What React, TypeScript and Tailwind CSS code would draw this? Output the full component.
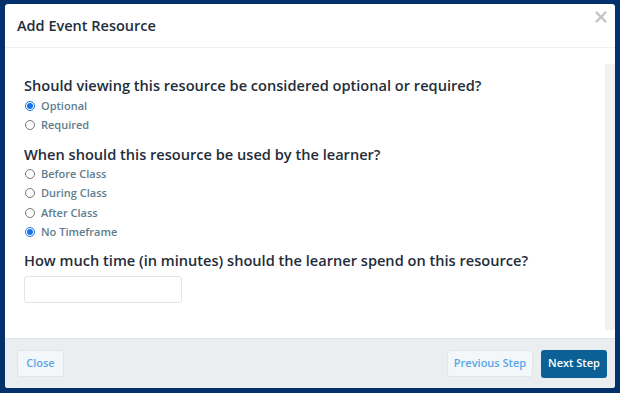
import { useState } from "react";
import { X } from "lucide-react";

const font = { fontFamily: '"Open Sans", "Noto Sans", sans-serif' };

function Radio({ label, checked, onChange }: { label: string; checked: boolean; onChange: () => void }) {
  return (
    <label className="flex h-[19.5px] items-center gap-[6px] pl-[1px] text-[11px] font-semibold text-[#5e7d8e]">
      <input
        type="radio"
        checked={checked}
        onChange={onChange}
        className="m-0 h-[10px] w-[10px] accent-[#1a73e8]"
      />
      <span>{label}</span>
    </label>
  );
}

export default function App() {
  const [need, setNeed] = useState("Optional");
  const [when, setWhen] = useState("No Timeframe");

  return (
    <div className="h-[393px] w-[620px] bg-[#04306b] pb-[5px] pl-[5px] pr-[5px] pt-[4px]" style={font}>
      <div className="flex h-full flex-col overflow-hidden rounded-[3px] bg-white">
        <header className="relative flex h-[44px] shrink-0 items-center border-b border-[#eef0f2] px-[12px]">
          <h1 className="text-[14.5px] font-semibold text-[#1f2d3a]">Add Event Resource</h1>
          <button
            type="button"
            aria-label="Close"
            className="absolute right-[5px] top-[4px] grid h-[18px] w-[18px] place-items-center text-[#c4c4c4]"
          >
            <X size={18} strokeWidth={3.2} />
          </button>
        </header>

        <div className="flex min-h-0 flex-1">
          <div className="flex-1 px-[19px] pt-[27px]">
            <h2 className="text-[14.6px] font-semibold leading-[20px] text-[#1f2d3a]">
              Should viewing this resource be considered optional or required?
            </h2>
            <div className="mt-[1px] flex flex-col">
              {["Optional", "Required"].map((o) => (
                <Radio key={o} label={o} checked={need === o} onChange={() => setNeed(o)} />
              ))}
            </div>

            <h2 className="mt-[9px] text-[14.6px] font-semibold leading-[20px] text-[#1f2d3a]">
              When should this resource be used by the learner?
            </h2>
            <div className="flex flex-col">
              {["Before Class", "During Class", "After Class", "No Timeframe"].map((o) => (
                <Radio key={o} label={o} checked={when === o} onChange={() => setWhen(o)} />
              ))}
            </div>

            <h2 className="mt-[8px] text-[14.6px] font-semibold leading-[20px] text-[#1f2d3a]">
              How much time (in minutes) should the learner spend on this resource?
            </h2>
            <input
              type="text"
              className="mt-[6px] h-[27px] w-[158px] rounded-[3px] border border-[#dfe5ea] bg-white px-2 text-[12px] outline-none"
            />
          </div>
          <div className="mb-[8px] mt-[16px] w-[10px] shrink-0 bg-[#f1f1f1]" />
        </div>

        <footer className="flex h-[50px] shrink-0 items-center justify-between border-t border-[#dfe4e9] bg-[#ebeef1] pl-[12px] pr-[8px]">
          <button
            type="button"
            className="h-[27px] w-[47px] rounded-[3px] border border-[#dfe5ea] bg-[#f4f7fa] text-[11px] font-semibold text-[#58a6e8]"
          >
            Close
          </button>
          <div className="flex gap-[8px]">
            <button
              type="button"
              className="h-[27px] w-[86px] rounded-[3px] border border-[#dfe5ea] bg-[#f4f7fa] text-[11px] font-semibold text-[#58a6e8]"
            >
              Previous Step
            </button>
            <button
              type="button"
              className="h-[28px] w-[66px] rounded-[3px] bg-[#0b6196] text-[11px] font-semibold text-white"
            >
              Next Step
            </button>
          </div>
        </footer>
      </div>
    </div>
  );
}
